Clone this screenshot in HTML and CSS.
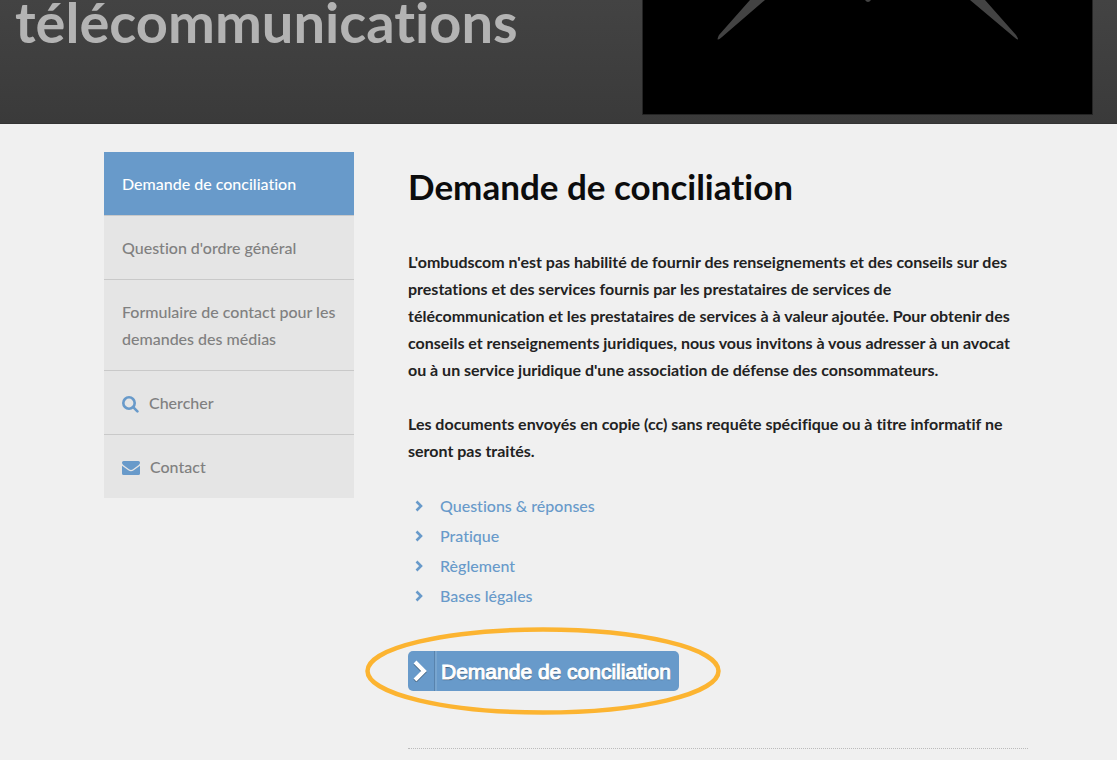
FILE: index.html
```html
<!DOCTYPE html>
<html lang="fr">
<head>
<meta charset="utf-8">
<meta name="viewport" content="width=device-width, initial-scale=1">
<title>Demande de conciliation</title>
<link rel="stylesheet" href="styles.css">
</head>
<body>
<header class="hero">
  <div class="hero-title">télécommunications</div>
  <svg class="hero-logo" viewBox="0 0 451 115" aria-hidden="true">
    <rect width="451" height="115" fill="#242424"/>
    <rect x="1" width="449" height="114" fill="#000"/>
    <path d="M108 0H123L80 37Q73 43 77 35ZM328 0H343L374 35Q379 43 372 37ZM223 0H229Q226 4 223 0Z" fill="#434343"/>
  </svg>
</header>
<div class="page">
  <nav class="side" aria-label="Navigation">
    <a class="side-link active" href="#demande">Demande de conciliation</a>
    <a class="side-link" href="#question">Question d'ordre général</a>
    <a class="side-link" href="#medias">Formulaire de contact pour les demandes des médias</a>
    <a class="side-link" href="#chercher"><svg class="icon-search" viewBox="0 0 17 17" aria-hidden="true"><circle cx="7" cy="7" r="5.7"/><path d="M11.2 11.2L15.4 15.4"/></svg>Chercher</a>
    <a class="side-link" href="#contact"><svg class="icon-mail" viewBox="0 0 18 14" aria-hidden="true"><path d="M0 1.6Q0 0 1.6 0H16.4Q18 0 18 1.6C18 3 17 3.9 16 4.600L11 8.200Q9 9.700 7 8.200L2 4.600C1 3.900 0 3 0 1.600ZM0 4.700L6.300 9.300Q9 11.200 11.700 9.300L18 4.700V12.400Q18 14 16.400 14H1.600Q0 14 0 12.400Z"/></svg>Contact</a>
  </nav>
  <main class="content">
    <h1>Demande de conciliation</h1>
    <p>L'ombudscom n'est pas habilité de fournir des renseignements et des conseils sur des prestations et des services fournis par les prestataires de services de télécommunication et les prestataires de services à à valeur ajoutée. Pour obtenir des conseils et renseignements juridiques, nous vous invitons à vous adresser à un avocat ou à un service juridique d'une association de défense des consommateurs.</p>
    <p>Les documents envoyés en copie (cc) sans requête spécifique ou à titre informatif ne seront pas traités.</p>
    <ul class="links">
      <li><svg class="chevron" viewBox="0 0 8 12" aria-hidden="true"><path d="M1.500 1.500L6 6L1.500 10.500"/></svg><a href="#faq">Questions &amp; réponses</a></li>
      <li><svg class="chevron" viewBox="0 0 8 12" aria-hidden="true"><path d="M1.500 1.500L6 6L1.500 10.500"/></svg><a href="#pratique">Pratique</a></li>
      <li><svg class="chevron" viewBox="0 0 8 12" aria-hidden="true"><path d="M1.500 1.500L6 6L1.500 10.500"/></svg><a href="#reglement">Règlement</a></li>
      <li><svg class="chevron" viewBox="0 0 8 12" aria-hidden="true"><path d="M1.500 1.500L6 6L1.500 10.500"/></svg><a href="#bases">Bases légales</a></li>
    </ul>
    <div class="action">
      <button class="cta" type="button"><span class="cta-icon"><svg viewBox="0 0 14 22" aria-hidden="true"><path class="shade" d="M2 3L11 12L2 21"/><path d="M2 2L11 11L2 20"/></svg></span><span class="cta-label">Demande de conciliation</span></button>
      <svg class="ring" viewBox="0 0 356 88" aria-hidden="true"><ellipse cx="178" cy="44" rx="175.500" ry="41.500"/></svg>
    </div>
    <hr>
  </main>
</div>
</body>
</html>
```
FILE: styles.css
```css
* {
  box-sizing: border-box;
}

body {
  margin: 0;
  background: #f0f0f0;
  color: #222;
  font: 400 16px/27px Lato, "Open Sans", sans-serif;
  font-variant-ligatures: no-common-ligatures;
}

a {
  color: #689aca;
  text-decoration: none;
}

.hero {
  display: flex;
  justify-content: space-between;
  align-items: flex-start;
  padding: 0 24px 8px 15px;
  background: linear-gradient(#434343, #3a3a3a);
  border-bottom: 1px solid #333;
}

.hero-title {
  color: #b3b3b3;
  font-size: 56px;
  font-weight: 700;
  line-height: 44px;
}

.hero-logo {
  display: block;
  width: 451px;
}

.page {
  display: grid;
  grid-template-columns: 250px minmax(0, 620px);
  gap: 54px;
  align-items: start;
  padding: 28px 89px 12px 104px;
}

.side-link {
  display: flex;
  align-items: center;
  padding: 18px;
  background: #e5e5e5;
  color: #808080;
  font-weight: 500;
}

.side-link + .side-link {
  border-top: 1px solid #c9c9c9;
}

.side-link.active {
  background: #689aca;
  color: #fff;
}

.icon-search {
  width: 17px;
  height: 17px;
  margin: 3px 10px 0 0;
  fill: none;
  stroke: #689aca;
  stroke-width: 2.6;
  stroke-linecap: round;
}

.icon-mail {
  width: 18px;
  height: 14px;
  margin: 2px 10px 0 0;
  fill: #689aca;
}

h1 {
  margin: 10px 0 38px;
  color: #0c0c0c;
  font-size: 35px;
  font-weight: 700;
  line-height: 48px;
}

p {
  margin: 0 0 27px;
  font-weight: 700;
}

.links {
  margin: 0 0 40px;
  padding: 0;
  list-style: none;
}

.links li {
  display: flex;
  align-items: center;
  gap: 17px;
  padding-left: 7px;
  font-weight: 500;
  line-height: 30px;
}

.chevron {
  width: 8px;
  height: 12px;
  fill: none;
  stroke: #689aca;
  stroke-width: 2.6;
}

.action {
  position: relative;
  width: fit-content;
}

.cta {
  display: flex;
  height: 40px;
  padding: 0;
  border: 0;
  border-radius: 5px;
  background: #689aca;
  color: #fff;
  font: 400 21px/42px "Liberation Sans", Arial, sans-serif;
  -webkit-text-stroke: 1px #fff;
  text-shadow: 0 1px 1px #234;
}

.cta-icon {
  display: flex;
  align-items: center;
  width: 27px;
  height: 40px;
  padding-left: 5px;
  border-right: 1px solid #5883ad;
}

.cta-icon svg {
  width: 14px;
  height: 22px;
  fill: none;
  stroke: #fff;
  stroke-width: 4;
}

.cta-icon .shade {
  stroke: #3b5873;
}

.cta-label {
  height: 40px;
  padding: 0 8px 0 4px;
  border-left: 2px solid #78a5cf;
}

.ring {
  position: absolute;
  top: -24px;
  left: -43px;
  width: 356px;
  height: 88px;
  fill: none;
  stroke: #fcb431;
  stroke-width: 4.5;
  pointer-events: none;
}

hr {
  margin: 57px 0 0;
  border: 0;
  border-top: 1px dotted #bbb;
}
```
